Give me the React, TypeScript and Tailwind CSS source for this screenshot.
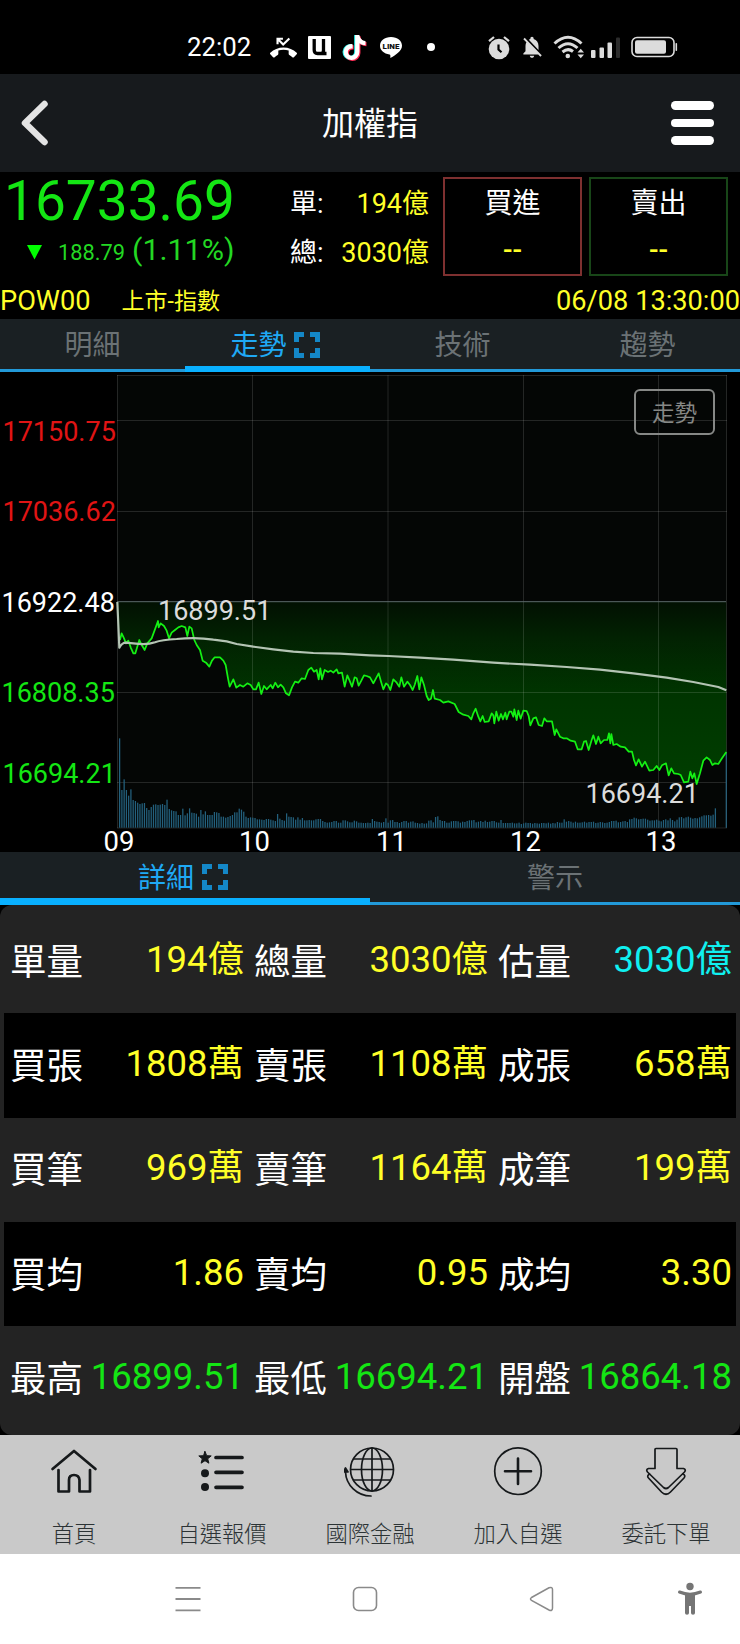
import type { ReactNode } from 'react'
import { MdNotificationsOff } from 'react-icons/md'
import { FaTiktok } from 'react-icons/fa'

// price line, plotted on a 2220 wide board (3 units per pixel)
const price =
  '360,150 365,130 372,145 378,160 385,152 392,172 400,190 406,190 418,150 425,165 434,180 442,160 455,145 466,115 474,93 476,112 482,100 492,108 500,122 507,145 515,128 525,120 535,112 545,108 556,112 562,138 568,110 575,115 583,150 590,165 600,180 608,212 618,218 628,230 636,212 644,202 660,202 670,212 677,225 684,265 689,290 700,268 709,293 720,285 730,290 742,280 752,285 760,298 768,298 776,278 784,312 792,288 800,298 812,285 818,295 826,278 834,292 842,284 850,292 858,310 867,316 876,292 885,275 895,278 905,265 915,267 925,240 934,233 942,245 950,240 956,268 961,235 966,268 974,240 984,246 992,242 1000,248 1010,238 1015,250 1026,248 1034,290 1042,256 1050,275 1056,290 1064,262 1070,265 1076,287 1084,272 1092,256 1100,258 1110,262 1120,280 1128,265 1136,250 1144,278 1150,298 1158,280 1164,285 1171,300 1180,268 1190,278 1198,290 1204,262 1212,290 1222,275 1230,285 1238,300 1244,285 1252,258 1258,298 1264,262 1272,285 1280,318 1286,330 1293,326 1299,300 1304,326 1320,330 1330,338 1345,334 1364,342 1376,366 1390,374 1405,378 1414,388 1420,370 1427,356 1435,380 1441,394 1448,378 1454,396 1466,394 1475,370 1480,376 1483,400 1489,365 1496,392 1503,372 1509,388 1516,368 1520,388 1528,365 1534,365 1540,380 1543,358 1550,390 1555,362 1562,386 1570,362 1580,363 1586,378 1591,406 1600,385 1608,382 1616,405 1626,408 1633,385 1640,394 1656,394 1664,435 1669,418 1680,440 1690,445 1700,445 1712,452 1725,455 1733,478 1745,478 1752,455 1758,453 1766,480 1775,450 1780,436 1788,462 1795,440 1802,460 1812,450 1822,450 1827,430 1831,460 1834,432 1840,465 1850,462 1862,470 1875,472 1886,485 1896,485 1902,510 1908,526 1916,508 1926,530 1935,515 1948,542 1960,540 1970,528 1978,540 1986,526 1998,520 2006,556 2014,535 2022,550 2035,552 2042,555 2052,577 2065,575 2071,545 2077,565 2083,550 2090,582 2100,550 2110,512 2120,502 2130,510 2137,525 2145,520 2155,522 2166,505 2179,486'

const average =
  'M352 36 L358 173 Q366 158 378 158 L400 160 Q440 166 465 157 Q485 149 530 147 Q590 141 640 149 L680 154 L710 162 L760 170 L820 178 L880 185 L940 189 L1020 191 L1110 196 L1165 198 L1260 203 L1360 209 L1480 218 L1590 224 L1700 231 L1800 239 L1900 250 L2000 263 L2080 276 L2155 291 L2179 301'

// one volume bar per minute
const volume = [
  268, 113, 145, 113, 96, 115, 83, 80, 75, 71, 73, 74, 59, 53, 62, 69, 70, 68, 69, 71, 68, 84, 56, 52, 50, 49, 38,
  38, 57, 37, 43, 58, 45, 44, 42, 33, 53, 40, 49, 38, 38, 38, 47, 46, 44, 33, 33, 30, 32, 35, 38, 46, 46, 57, 54, 48,
  33, 29, 31, 30, 29, 25, 25, 24, 23, 26, 26, 24, 22, 20, 41, 27, 23, 21, 43, 33, 32, 31, 24, 31, 24, 29, 22, 22, 23,
  22, 22, 25, 26, 26, 20, 17, 15, 16, 17, 20, 20, 15, 15, 22, 22, 19, 16, 16, 21, 19, 15, 15, 14, 14, 15, 14, 26, 20,
  18, 17, 15, 17, 28, 15, 22, 23, 17, 17, 14, 17, 20, 20, 15, 18, 19, 15, 14, 12, 14, 12, 13, 21, 22, 16, 32, 34, 23,
  20, 20, 15, 15, 19, 20, 20, 19, 15, 18, 17, 20, 22, 22, 23, 16, 18, 20, 17, 21, 17, 18, 20, 20, 16, 15, 23, 14, 14,
  14, 14, 15, 13, 13, 15, 11, 13, 15, 14, 14, 12, 14, 13, 12, 14, 14, 13, 15, 12, 14, 13, 17, 15, 15, 25, 18, 20, 18,
  15, 18, 15, 15, 16, 18, 15, 17, 17, 18, 14, 15, 17, 16, 14, 15, 17, 20, 20, 21, 16, 17, 19, 20, 17, 25, 26, 30,
  28, 25, 26, 27, 27, 24, 21, 22, 22, 24, 21, 19, 23, 25, 22, 28, 23, 19, 24, 31, 32, 28, 31, 33, 30, 27, 29, 28, 31,
  34, 37, 37, 38, 36, 39, 58
]

const tabs = ['明細', '走勢', '技術', '趨勢']

const levels = [
  { label: '17150.75', x: 2.5, y: 68.5, color: '#e01414' },
  { label: '17036.62', x: 2.5, y: 148.5, color: '#e01414' },
  { label: '16922.48', x: 1.5, y: 239.5, color: '#ffffff' },
  { label: '16808.35', x: 1.5, y: 329.5, color: '#14e614' },
  { label: '16694.21', x: 2.5, y: 410.5, color: '#14e614' }
]

const hours = [
  { label: '09', x: 103.5 },
  { label: '10', x: 239 },
  { label: '11', x: 376 },
  { label: '12', x: 510 },
  { label: '13', x: 645.5 }
]

const details = [
  ['單量', '194億', '總量', '3030億', '估量', '3030億'],
  ['買張', '1808萬', '賣張', '1108萬', '成張', '658萬'],
  ['買筆', '969萬', '賣筆', '1164萬', '成筆', '199萬'],
  ['買均', '1.86', '賣均', '0.95', '成均', '3.30'],
  ['最高', '16899.51', '最低', '16694.21', '開盤', '16864.18']
]

function Expand() {
  return (
    <svg className="h-[26px] w-[26px]" viewBox="0 0 26 26" fill="none" stroke="#1488c8" strokeWidth="5">
      <path d="M2.5 10V2.5H10M16 2.5h7.5V10M23.5 16v7.5H16M10 23.5H2.5V16" />
    </svg>
  )
}

function StatusBar() {
  return (
    <div className="flex h-[74px] items-center bg-black pt-5 pl-[186px] text-white">

      <span className="w-[84px] pt-px pl-px text-[25.800px] leading-none">22:02</span>

      <svg className="h-[27px] w-[27px]" viewBox="0 0 24 24">
        <path d="M6.700 9V4.200H11.500M6.700 4.200L11.700 9.300L17.200 4" fill="none" stroke="#fff" strokeWidth="1.900" />
        <path
          d="M23.710 16.670C20.660 13.780 16.540 12 12 12 7.460 12 3.340 13.780.290 16.670c-.180.180-.290.430-.290.710 0 .280.110.530.290.710l2.480 2.480c.180.180.430.290.710.290.270 0 .520-.110.700-.280.790-.740 1.690-1.360 2.660-1.850.330-.160.560-.500.560-.900v-3.100c1.450-.480 3-.730 4.600-.730s3.150.250 4.600.720v3.100c0 .390.230.740.560.900.980.490 1.870 1.120 2.670 1.850.180.180.430.280.700.280.280 0 .530-.110.710-.290l2.480-2.480c.180-.180.290-.430.290-.710 0-.280-.120-.520-.300-.700z"
          fill="#fff"
        />
      </svg>

      <svg className="ml-[11px] h-[23px] w-[23px]" viewBox="0 0 23 23">
        <rect width="23" height="23" rx="1" fill="#fff" />
        <path d="M6.200 3V14Q6.200 17.500 9.500 17.500H13Q15.500 17.500 15.500 14V3M15.500 13V17.500H18.500" fill="none" stroke="#000" strokeWidth="3.300" />
      </svg>

      <span className="relative ml-[12px] h-[25px] w-[23px]">
        <FaTiktok className="absolute top-0 -left-px h-[25px] w-[23px] text-[#25f4ee]" />
        <FaTiktok className="absolute top-px left-px h-[25px] w-[23px] text-[#fe2c55]" />
        <FaTiktok className="absolute top-0 left-0 h-[25px] w-[23px]" />
      </span>

      <svg className="ml-[13px] h-[23px] w-[24px]" viewBox="0 0 24 23">
        <path d="M12 1C5.500 1 1 4.800 1 9.800c0 4.500 4 8 9.500 8.600 1 .2 1 1 .8 3.600 5-2.500 11.700-7 11.700-12.200C23 4.800 18.500 1 12 1z" fill="#fff" />
        <text x="12" y="12.800" textAnchor="middle" fontSize="8" fontWeight="900" fill="#111">LINE</text>
      </svg>

      <span className="ml-[24px] h-2 w-2 rounded-full bg-white" />

      {/* system side */}

      <svg className="ml-[52px] h-[25px] w-[24px]" viewBox="0 0 24 25">
        <circle cx="12" cy="14" r="10.300" fill="#dcdcdc" />
        <path d="M2 6.200L7 2M22 6.200L17 2" stroke="#dcdcdc" strokeWidth="2.200" />
        <path d="M11.500 9.500v5l3 2.700" fill="none" stroke="#000" strokeWidth="2.200" />
      </svg>

      <MdNotificationsOff className="ml-[8px] h-[26px] w-[26px] text-[#dcdcdc]" />

      <svg className="ml-[8px] h-[24px] w-[32px]" viewBox="0 0 32 24" fill="none" stroke="#dcdcdc" strokeWidth="3">
        <path d="M1.500 8.500Q15 -4 28.500 8.500M5.500 13Q15 4.500 24.500 13M9.500 17Q15 12.500 20 16.500" />
        <circle cx="14.800" cy="21" r="2.300" fill="#dcdcdc" stroke="none" />
        <path d="M24.500 17.500h6.500l-3.250-3.800zM24.500 19.500h6.500l-3.250 3.800z" fill="#dcdcdc" stroke="none" />
      </svg>

      <svg className="ml-[6px] h-[22px] w-[30px]" viewBox="0 0 30 22" fill="#dcdcdc">
        <rect x="0" y="14" width="4.500" height="8" rx="1" />
        <rect x="8.500" y="11.500" width="4.500" height="10.500" rx="1" />
        <rect x="16.500" y="6.500" width="4.500" height="15.500" rx="1" />
        <rect x="25" y="1.500" width="4" height="20.500" rx="1" fill="#2c2c2c" />
      </svg>

      <svg className="ml-[10px] h-[22px] w-[47px]" viewBox="0 0 47 22">
        <rect x="1" y="1.500" width="42" height="19" rx="5" fill="none" stroke="#dcdcdc" strokeWidth="1.600" />
        <rect x="4" y="4.200" width="31" height="13.600" rx="2" fill="#dcdcdc" />
        <rect x="44.500" y="7" width="1.600" height="8" rx=".8" fill="#dcdcdc" />
      </svg>

    </div>
  )
}

function Chart() {
  return (
    <div className="relative h-[480px] bg-black">

      <svg className="block h-[480px] w-[740px] overflow-visible" viewBox="0 0 740 480">
        <defs>
          <linearGradient id="fall" x1="0" y1="36" x2="0" y2="582" gradientUnits="userSpaceOnUse">
            <stop offset="0" stopColor="#021002" />
            <stop offset=".2" stopColor="#022202" />
            <stop offset=".5" stopColor="#003400" />
            <stop offset="1" stopColor="#003e00" />
          </linearGradient>
        </defs>

        <rect x="117" y="3" width="610" height="453" fill="#040605" />

        <polygon
          points={`352,36 ${price} 2179,36`}
          transform="translate(0 218) scale(.33333)"
          fill="url(#fall)"
        />

        <path
          d="M117 3.500H727M117 48.500H727M117 139.500H727M117 320.500H727M117 410.500H727M117 456H727M117.500 3V456M252.500 3V456M388 3V456M523.500 3V456M658.500 3V456M726.500 3V456"
          stroke="#fff"
          strokeOpacity=".13"
          fill="none"
        />
        <path d="M117 229.700H726" stroke="#5d6a6c" />

        <g transform="translate(0 218) scale(.33333)" fill="none">
          {volume.map((h, i) => (
            <rect key={i} x={357 + i * 6.77} y={713 - h} width="3.800" height={h} fill="#23607d" />
          ))}
          <path d="M2179 486V713" stroke="#2a5f78" strokeWidth="4" />
          <polyline points={price} stroke="#14f014" strokeWidth="5.200" strokeLinejoin="round" />
          <path d={average} stroke="#b4c4b4" strokeWidth="6.500" strokeLinejoin="round" />
        </g>

        <g fontSize="27">
          {levels.map((l) => (
            <text key={l.label} x={l.x} y={l.y} fill={l.color}>{l.label}</text>
          ))}
          {hours.map((h) => (
            <text key={h.label} x={h.x} y="478.500" fontSize="27.500" fill="#fff">{h.label}</text>
          ))}
          <text x="158" y="247.500" fill="#dcdcdc">16899.51</text>
          <text x="585.500" y="431" fill="#dcdcdc">16694.21</text>
        </g>
      </svg>

      <button className="absolute top-[17px] right-[25px] h-[46px] w-[81px] rounded-md border-2 border-[#868886] pt-[3px] text-[22.500px] text-[#868886]">
        走勢
      </button>

    </div>
  )
}

function NavItem({ label, children }: { label: string; children: ReactNode }) {
  return (
    <div className="flex flex-col items-center pt-[12px]">
      <svg className="h-[52px] w-[52px]" viewBox="0 0 52 52" fill="none" stroke="#16191b" strokeWidth="1.700" strokeLinejoin="round" strokeLinecap="round">
        {children}
      </svg>
      <span className="mt-[19px] text-[22.300px] leading-[32px] font-light text-[#2c3335]">{label}</span>
    </div>
  )
}

export default function App() {

  return (

    <div className="w-[740px] bg-black font-['Roboto','Noto_Sans_CJK_TC',sans-serif] text-white">

      <StatusBar />

      {/* HEADER */}

      <div className="flex h-[98px] items-center justify-between bg-[#171a1d] pr-[26px] pl-[21px]">
        <svg className="h-[46px] w-[48px]" viewBox="0 0 48 46">
          <path d="M23.500 4L4 23L23.500 42" fill="none" stroke="#e4e4e4" strokeWidth="6.500" strokeLinecap="round" strokeLinejoin="round" />
        </svg>
        <h1 className="pt-px text-[32px] leading-none">加權指</h1>
        <div className="flex w-[43px] flex-col gap-[9px]">
          <span className="h-[8.500px] rounded-full bg-white" />
          <span className="h-[8.500px] rounded-full bg-white" />
          <span className="h-[8.500px] rounded-full bg-white" />
        </div>
      </div>

      {/* QUOTE */}

      <div className="flex h-[109px]">

        <div className="w-[290px] pl-[4px] text-[#14e614]">
          <div className="h-[55px] text-[55px] leading-[58px]">16733.69</div>
          <div className="flex items-baseline pl-[23px] leading-[46px] text-[#23d823]">
            <svg className="h-[15px] w-[15px]" viewBox="0 0 15 15">
              <path d="M0 0h15L7.500 14.500z" fill="#00ff00" />
            </svg>
            <span className="ml-[16px] text-[21.800px]">188.79</span>
            <span className="ml-[7px] text-[30.400px]">(1.11%)</span>
          </div>
        </div>

        <div className="w-[139px] pt-[8px] text-[27px] leading-[49px]">
          <div className="flex justify-between">
            <span>單:</span>
            <span className="text-[#ffff28]">194億</span>
          </div>
          <div className="flex justify-between">
            <span>總:</span>
            <span className="text-[#ffff28]">3030億</span>
          </div>
        </div>

        <div className="mt-[5px] ml-[14px] h-[99px] w-[139px] border-2 border-[#7e3030] pt-[2px] text-center text-[28px] leading-[46px]">
          <div>買進</div>
          <div className="font-medium text-[#ffff28]">--</div>
        </div>

        <div className="mt-[5px] ml-[7px] h-[99px] w-[139px] border-2 border-[#184618] pt-[2px] text-center text-[28px] leading-[46px]">
          <div>賣出</div>
          <div className="font-medium text-[#ffff28]">--</div>
        </div>

      </div>

      <div className="flex h-[38px] items-center pt-[3px] text-[27.200px] leading-none text-[#ffff28]">
        <span>POW00</span>
        <span className="ml-[31px] text-[23px]">上市-指數</span>
        <span className="ml-auto">06/08 13:30:00</span>
      </div>

      {/* CHART TABS */}

      <div className="grid h-[53px] grid-cols-4 bg-[#1a2023] text-[28px] leading-[42px] text-[#6b7275]">
        {tabs.map((tab) =>
          tab === '走勢' ? (
            <div key={tab} className="flex h-[53px] items-center justify-center gap-[7px] border-b-[6px] border-[#09b0ff] pt-[4px] pr-[5px] text-[#1fa9f5]">
              <span className="pt-[3px] leading-none">{tab}</span>
              <Expand />
            </div>
          ) : (
            <div key={tab} className="h-[53px] border-b-[3px] border-[#2299d8] pt-[6px] text-center">{tab}</div>
          )
        )}
      </div>

      <Chart />

      {/* DETAIL TABS */}

      <div className="grid h-[53px] grid-cols-2 bg-[#1a2023] text-[28px] leading-[42px] text-[#6b7275]">
        <div className="flex h-[53px] items-center justify-center gap-[8px] border-b-[7px] border-[#09b0ff] pt-[4px] pr-[4px] text-[#1fa9f5]">
          <span className="pt-[3px] leading-none">詳細</span>
          <Expand />
        </div>
        <div className="h-[53px] border-b-[3px] border-[#2299d8] pt-[6px] text-center">警示</div>
      </div>

      {/* DETAILS */}

      <div className="h-[530px] rounded-xl bg-[#232323] px-1 pt-1">
        {details.map((row, r) => (
          <div key={row[0]} className={r % 2 ? 'grid h-[104.300px] grid-cols-3 bg-black' : 'grid h-[104.300px] grid-cols-3'}>
            {[0, 2, 4].map((c) => (
              <div key={c} className="flex items-center justify-between pr-[4px] pl-[6px] text-[36.500px] leading-none">
                <span className="pt-[4px]">{row[c]}</span>
                <span
                  className={
                    r === 4
                      ? 'pb-[2px] text-[#14e614]'
                      : r === 0 && c === 4
                        ? 'pb-[2px] text-[#10f0f0]'
                        : 'pb-[2px] text-[#ffff28]'
                  }
                >
                  {row[c + 1]}
                </span>
              </div>
            ))}
          </div>
        ))}
      </div>

      {/* APP NAV */}

      <div className="grid h-[119px] grid-cols-5 bg-[#c9c9c9]">

        <NavItem label="首頁">
          <path d="M4.500 22L26 4L47.500 22" strokeWidth="2.700" />
          <path d="M10.500 23V44.500H21V33q0-5 5-5t5.500 5V44.500H42V23" strokeWidth="2.700" />
        </NavItem>

        <NavItem label="自選報價">
          <path d="M9 4.500l1.700 4.200 4.500.2-3.500 2.900 1.200 4.400L9 13.700l-3.900 2.500 1.200-4.400L2.800 8.900l4.500-.2z" fill="#16191b" strokeWidth="1" />
          <circle cx="9" cy="26.300" r="4" fill="#16191b" stroke="none" />
          <circle cx="9" cy="40" r="4" fill="#16191b" stroke="none" />
          <path d="M20 10.500H46M20 25.300H46M20 40.300H46" strokeWidth="3.700" />
        </NavItem>

        <NavItem label="國際金融">
          <circle cx="28" cy="22.500" r="21.500" />
          <ellipse cx="28" cy="22.500" rx="10.500" ry="21.500" />
          <path d="M28 1V44M7 22.500H49M9.500 12H46.500M9.500 33H46.500" />
          <path d="M1.500 25C2 38 13 49 27 49" />
          <path d="M-.5 25L1.500 21l2.500 4z" fill="#16191b" />
        </NavItem>

        <NavItem label="加入自選">
          <circle cx="26" cy="24.200" r="23.300" />
          <path d="M26 11.500V37M13 24.300H39" strokeWidth="2.600" />
        </NavItem>

        <NavItem label="委託下單">
          <path d="M15 2.500q0-1 1-1H36q1 0 1 1V21.500h6.500q3 1 1 3.500L28.500 40.500q-2.500 2-5 0L7.500 25q-2-2.500 1-3.500H15z" />
          <path d="M9.500 27q-3 2-1 4L21.500 45q4.500 4.500 9 0L44 31q2-2.500-1-4" />
        </NavItem>

      </div>

      {/* SYSTEM NAV */}

      <div className="flex h-[90px] items-center bg-white pl-[175px]">
        <svg className="h-[26px] w-[26px]" viewBox="0 0 26 26">
          <path d="M.5 1.800H25.500M.5 13H25.500M.5 24.300H25.500" stroke="#8a8a8a" strokeWidth="1.800" />
        </svg>
        <svg className="ml-[151px] h-[26px] w-[26px]" viewBox="0 0 26 26">
          <rect x="1.500" y="1.500" width="23" height="23" rx="5" fill="none" stroke="#8a8a8a" strokeWidth="1.600" />
        </svg>
        <svg className="ml-[151px] h-[26px] w-[26px]" viewBox="0 0 26 26">
          <path d="M2.500 11.500L20 1.800Q23.500 .5 23.500 3.500V22q0 3.500-3.500 2L2.500 14.300q-2-1.400 0-2.800z" fill="none" stroke="#8a8a8a" strokeWidth="1.500" />
        </svg>
        <svg className="ml-[122px] h-[34px] w-[26px]" viewBox="0 0 26 34">
          <circle cx="13" cy="4.500" r="3.700" fill="#757575" />
          <path d="M2.500 10Q13 14.500 23.500 10" fill="none" stroke="#757575" strokeWidth="3" strokeLinecap="round" />
          <path d="M8 11H18V31q0 1.800-2 1.800t-2-1.800V24H12V31q0 1.800-2 1.800T8 31z" fill="#757575" />
        </svg>
      </div>

    </div>

  )

}
